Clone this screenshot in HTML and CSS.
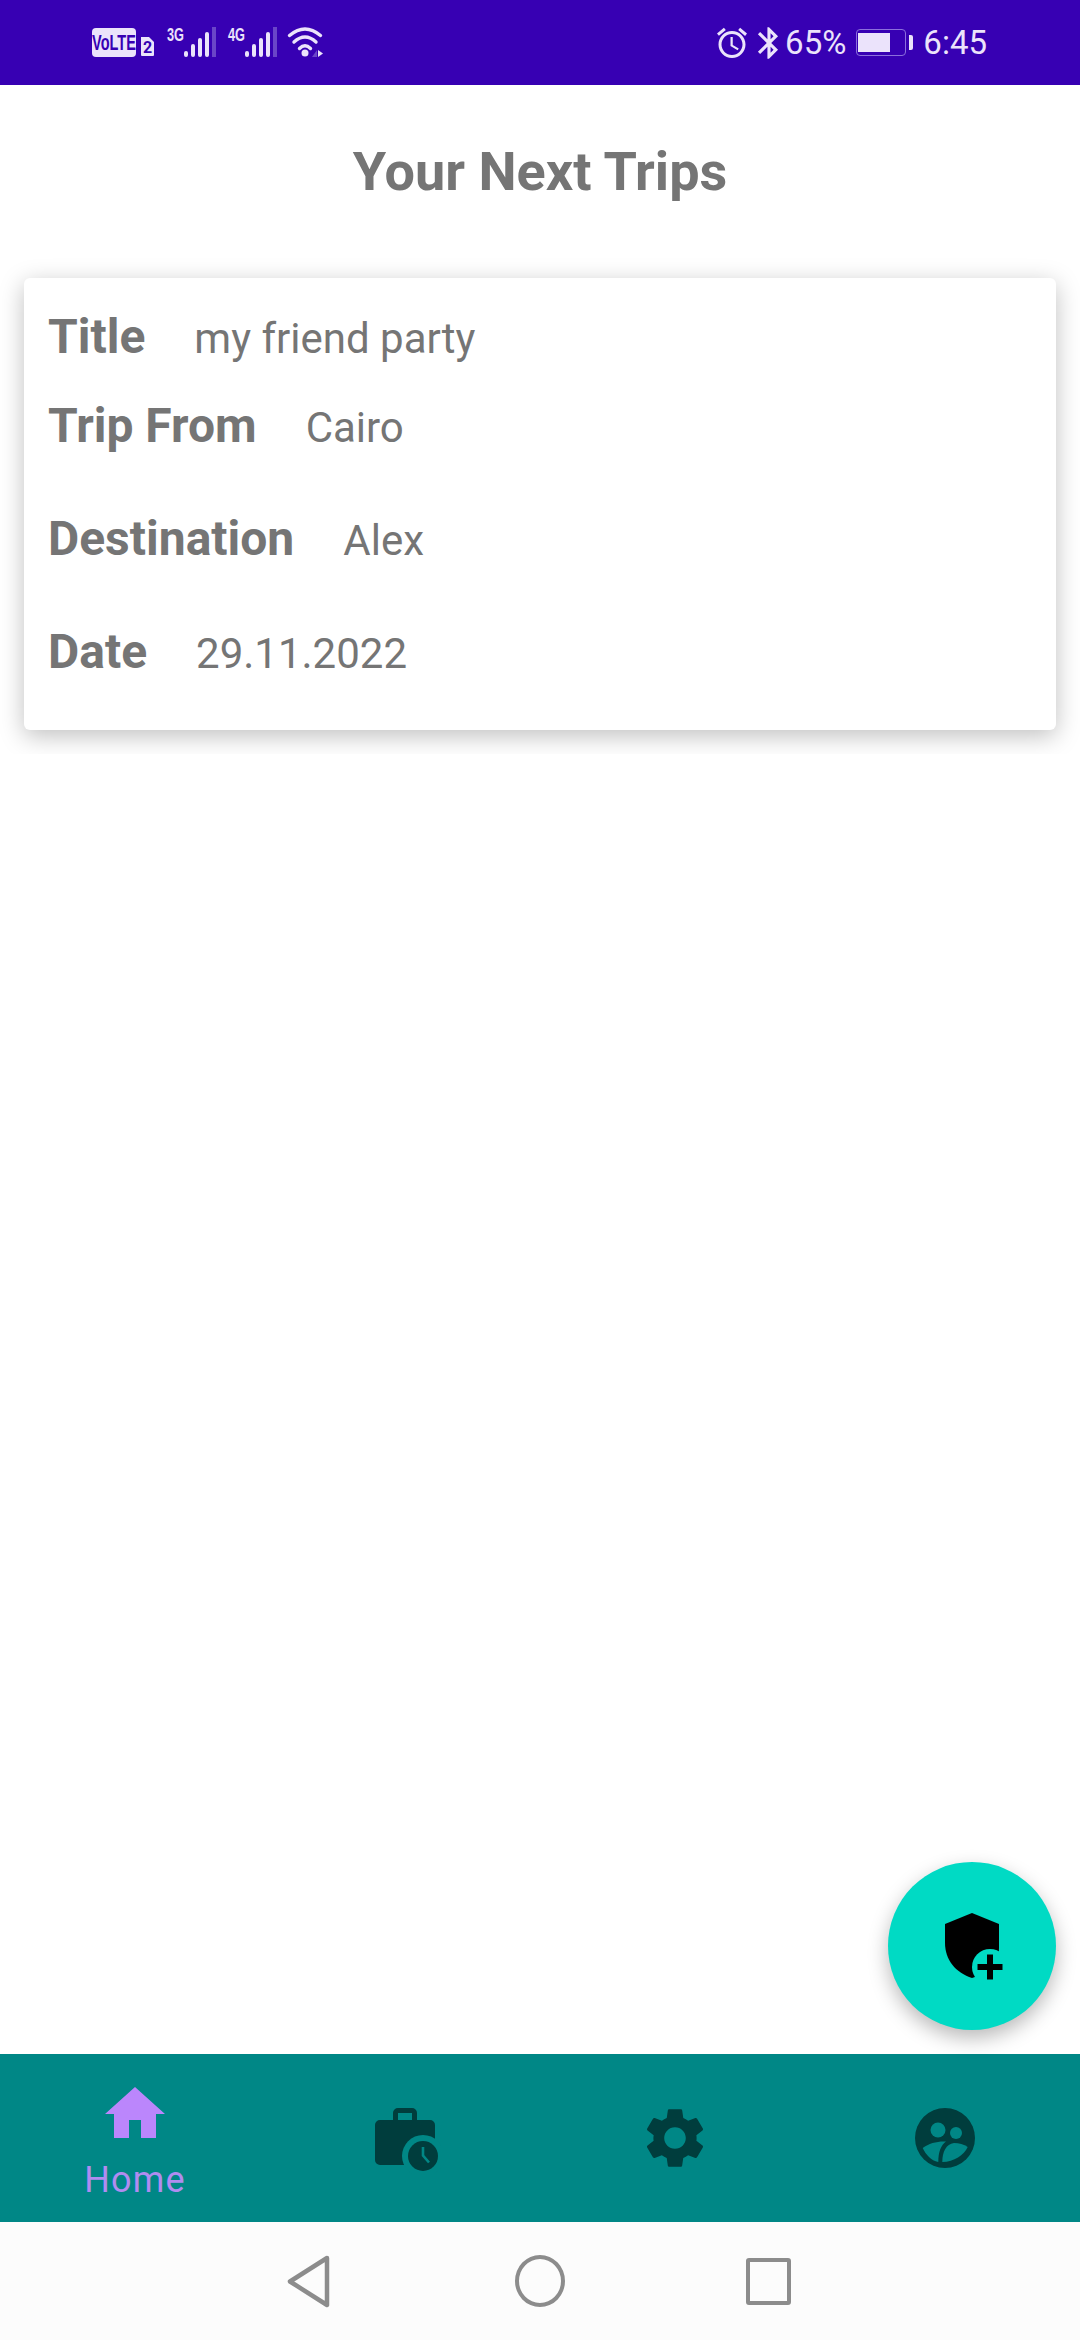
FILE: index.html
```html
<!DOCTYPE html>
<html lang="en">
<head>
<meta charset="utf-8">
<title>Your Next Trips</title>
<link rel="stylesheet" href="styles.css">
</head>
<body>
<div class="phone">
  <header class="status">
    <svg class="status-left" width="235" height="40" viewBox="0 0 235 40">
      <rect x="0" y="5" width="44" height="29" rx="4" fill="#ebe3fb"/>
      <text class="volte" transform="translate(22 27) scale(.66 1)" text-anchor="middle">VoLTE</text>
      <path d="M49 14h8l5 5v13a1 1 0 0 1-1 1H50a1 1 0 0 1-1-1z" fill="#ebe3fb"/>
      <text class="sim" x="55.500" y="30" text-anchor="middle">2</text>
      <text class="net" x="75" y="18" textLength="17" lengthAdjust="spacingAndGlyphs">3G</text>
      <g fill="#ebe3fb">
        <rect x="92" y="28" width="4" height="6" rx="2"/>
        <rect x="99" y="21" width="4" height="13" rx="2"/>
        <rect x="106" y="15" width="4" height="19" rx="2"/>
        <rect x="113" y="9" width="4" height="25" rx="2"/>
      </g>
      <rect x="120" y="4" width="4" height="30" fill="#6a45c8"/>
      <text class="net" x="136" y="18" textLength="17" lengthAdjust="spacingAndGlyphs">4G</text>
      <g fill="#ebe3fb">
        <rect x="153" y="28" width="4" height="6" rx="2"/>
        <rect x="160" y="21" width="4" height="13" rx="2"/>
        <rect x="167" y="15" width="4" height="19" rx="2"/>
        <rect x="174" y="9" width="4" height="25" rx="2"/>
      </g>
      <rect x="181" y="4" width="4" height="30" fill="#6a45c8"/>
      <g fill="none" stroke="#ebe3fb" stroke-width="3.400" stroke-linecap="round">
        <path d="M197.500 12.500Q213 -0.500 228.500 12.500"/>
        <path d="M202 19Q213 9 224 19"/>
        <path d="M207.500 25.500Q213 20 218.500 25.500"/>
      </g>
      <circle cx="213" cy="30" r="3.500" fill="#ebe3fb"/>
      <path d="M226 27l5 3.500-5 3.500z" fill="#ebe3fb"/>
      <path d="M220 34l5-7v7z" fill="#6a45c8"/>
    </svg>
    <div class="status-right">
      <svg class="alarm" width="36" height="36" viewBox="0 0 24 24"><path d="M22 5.720l-4.600-3.860-1.290 1.530 4.600 3.860L22 5.720zM7.880 3.390L6.600 1.860 2 5.710l1.290 1.530 4.590-3.850zM12.500 8H11v6l4.750 2.850.75-1.230-4-2.370V8zM12 4c-4.970 0-9 4.030-9 9s4.020 9 9 9c4.970 0 9-4.030 9-9s-4.030-9-9-9zm0 16c-3.870 0-7-3.130-7-7s3.130-7 7-7 7 3.130 7 7-3.130 7-7 7z"/></svg>
      <svg class="bt" width="38" height="38" viewBox="0 0 24 24"><path d="M17.710 7.710L12 2h-1v7.590L6.410 5 5 6.410 10.590 12 5 17.590 6.410 19 11 14.410V22h1l5.710-5.710-4.300-4.290 4.300-4.290zM13 5.830l1.880 1.880L13 9.590V5.830zm1.880 10.460L13 18.170v-3.760l1.880 1.880z"/></svg>
      <span class="pct">65%</span>
      <span class="battery"><span class="battery-fill"></span></span>
      <span class="battery-nub"></span>
      <span class="clock">6:45</span>
    </div>
  </header>

  <main class="content">
    <h1 class="page-title">Your Next Trips</h1>
    <section class="card-clip">
      <article class="card">
        <div class="row row-title"><span class="label">Title</span><span class="value">my friend party</span></div>
        <div class="row row-from"><span class="label">Trip From</span><span class="value">Cairo</span></div>
        <div class="row row-dest"><span class="label">Destination</span><span class="value">Alex</span></div>
        <div class="row row-date"><span class="label">Date</span><span class="value">29.11.2022</span></div>
      </article>
    </section>
    <button class="fab" type="button" aria-label="Add trip">
      <svg width="100" height="100" viewBox="-18 -12 100 100">
        <path d="M32 5L59 16V40C59 55 48 65 32 70C16 65 5 52 5 35V16Z" fill="#000"/>
        <circle cx="50" cy="59" r="18" fill="#00dac4"/>
        <path d="M37.500 56h9.500v-9.500h6v9.500h9.500v6h-9.500v9.500h-6v-9.500h-9.500z" fill="#000"/>
      </svg>
    </button>
  </main>

  <nav class="tabs">
    <div class="tab tab-active">
      <svg class="tab-icon" viewBox="0 0 24 24"><path d="M10 20v-6h4v6h5v-8h3L12 3 2 12h3v8z"/></svg>
      <span class="tab-label">Home</span>
    </div>
    <div class="tab">
      <svg class="tab-icon" viewBox="0 0 72 72">
        <path fill-rule="evenodd" d="M11 18H24V11a5 5 0 0 1 5-5H43a5 5 0 0 1 5 5V18H61a5 5 0 0 1 5 5V63H11a5 5 0 0 1-5-5V23a5 5 0 0 1 5-5zM29 11V18H43V11z"/>
        <circle cx="54" cy="54" r="21" fill="#008786"/>
        <circle cx="54" cy="54" r="15"/>
        <path d="M54 45V53.500L60 60.500" fill="none" stroke="#008786" stroke-width="2.600"/>
      </svg>
    </div>
    <div class="tab">
      <svg class="tab-icon" viewBox="0 0 24 24"><path d="M19.140 12.940c.04-.3.06-.61.06-.94 0-.32-.02-.64-.07-.94l2.030-1.580c.18-.14.23-.41.12-.61l-1.920-3.320c-.12-.22-.37-.29-.59-.22l-2.390.96c-.5-.38-1.030-.7-1.620-.94l-.36-2.540c-.04-.24-.24-.41-.48-.41h-3.840c-.24 0-.43.17-.47.41l-.36 2.540c-.59.24-1.130.57-1.620.94l-2.390-.96c-.22-.08-.47 0-.59.22L2.740 8.870c-.12.21-.08.47.12.61l2.030 1.580c-.05.3-.09.63-.09.94s.02.64.07.94l-2.030 1.580c-.18.14-.23.41-.12.61l1.920 3.320c.12.22.37.29.59.22l2.390-.96c.5.38 1.030.7 1.620.94l.36 2.540c.05.24.24.41.48.41h3.840c.24 0 .44-.17.47-.41l.36-2.540c.59-.24 1.130-.56 1.620-.94l2.390.96c.22.08.47 0 .59-.22l1.920-3.320c.12-.22.07-.47-.12-.61l-2.010-1.580zM12 15.600c-1.980 0-3.600-1.620-3.600-3.600s1.620-3.600 3.600-3.600 3.600 1.620 3.600 3.600-1.620 3.600-3.600 3.600z"/></svg>
    </div>
    <div class="tab">
      <svg class="tab-icon" viewBox="0 0 72 72">
        <circle cx="36" cy="36" r="30"/>
        <g fill="#008786">
          <circle cx="29" cy="28" r="7.500"/>
          <circle cx="47" cy="31" r="6"/>
          <path d="M13.700 46C20 41 29 39 37 39.500C32 43 29.300 50 29.300 60C22 58.500 17 53 13.700 46Z"/>
          <path d="M33.300 60C33.300 50 37 42 45 41C50 41 55 42.500 58.700 45C55 53 45 60 33.300 60Z"/>
        </g>
      </svg>
    </div>
  </nav>

  <footer class="sysnav">
    <svg class="sys-back" width="43" height="53" viewBox="0 0 43 53"><path d="M40 3L3 26.500L40 50Z" fill="none" stroke="#8c8c8c" stroke-width="4.500" stroke-linejoin="round"/></svg>
    <span class="sys-home"></span>
    <span class="sys-recent"></span>
  </footer>
</div>
</body>
</html>
```

FILE: styles.css
```css
* { box-sizing: border-box; }
html, body { margin: 0; padding: 0; }
body { background: #fff; font-family: Roboto, "Liberation Sans", sans-serif; }
.phone { width: 1080px; height: 2340px; display: flex; flex-direction: column; overflow: hidden; }

.status { height: 85px; flex: none; background: #3700b3; display: flex; align-items: center; justify-content: space-between; padding: 0 93px 0 92px; color: #ebe3fb; }
.status-left { display: block; margin-top: 1px; overflow: visible; }
.volte { font: 700 22px "Liberation Sans Narrow", "Liberation Sans", sans-serif; fill: #3700b3; }
.sim { font: 700 16px Roboto, sans-serif; fill: #3700b3; }
.net { font: 700 19px "Liberation Sans Narrow", "Liberation Sans", sans-serif; fill: #ebe3fb; }
.status-right { display: flex; align-items: center; }
.status-right svg { fill: #ebe3fb; display: block; flex: none; }
.bt { margin-right: -3px; }
.pct, .clock { font-size: 33px; line-height: 40px; font-weight: 400; }
.pct { margin-right: 10px; }
.battery { width: 50px; height: 27px; border: 1.5px solid #8b6fdc; border-radius: 4px; padding: 2.5px 1px; display: block; flex: none; }
.battery-fill { display: block; width: 32px; height: 19px; background: #ebe3fb; }
.battery-nub { width: 4px; height: 15px; margin-left: 3px; background: #ebe3fb; border-radius: 0 2px 2px 0; margin-right: 10px; flex: none; }

.content { flex: 1; position: relative; min-height: 0; }
.page-title { margin: 0; height: 169px; padding-top: 57px; text-align: center; font-size: 54px; line-height: 60px; font-weight: 700; color: #757575; }
.card-clip { padding: 24px; overflow: hidden; height: 500px; }
.card { height: 452px; background: #fff; border-radius: 6px; padding: 0 24px; box-shadow: 0 6px 24px rgba(0, 0, 0, .25); }
.row { display: flex; align-items: baseline; gap: 49px; color: #757575; }
.label { font-size: 48px; line-height: 60px; font-weight: 700; }
.value { font-size: 42px; line-height: 60px; font-weight: 400; }
.row-title { padding-top: 29px; }
.row-from { padding-top: 27px; }
.row-dest { padding-top: 51px; }
.row-date { padding-top: 51px; }

.fab { position: absolute; left: 888px; top: 1777px; width: 168px; height: 168px; border: 0; padding: 0; border-radius: 50%; background: #00dac4; box-shadow: 0 8px 20px rgba(0, 0, 0, .28); display: flex; align-items: center; justify-content: center; }
.fab svg { display: block; }

.tabs { height: 168px; flex: none; background: #008786; display: grid; grid-template-columns: repeat(4, 270px); }
.tab { display: flex; flex-direction: column; align-items: center; padding-top: 48px; }
.tab-icon { width: 72px; height: 72px; display: block; fill: #003d3d; flex: none; }
.tab-active { padding-top: 24px; }
.tab-active .tab-icon { fill: #bb86fc; }
.tab-label { font-size: 36px; line-height: 42px; letter-spacing: 1.2px; color: #b08cf0; margin-top: 9px; }

.sysnav { height: 118px; flex: none; background: #fcfcfc; display: flex; align-items: center; padding-left: 287px; }
.sys-back { display: block; margin-right: 185px; flex: none; }
.sys-home { width: 50px; height: 52px; border: 4.5px solid #8c8c8c; border-radius: 50%; margin-right: 181px; flex: none; }
.sys-recent { width: 45px; height: 47px; border: 4.5px solid #8c8c8c; border-radius: 3px; flex: none; }
```
